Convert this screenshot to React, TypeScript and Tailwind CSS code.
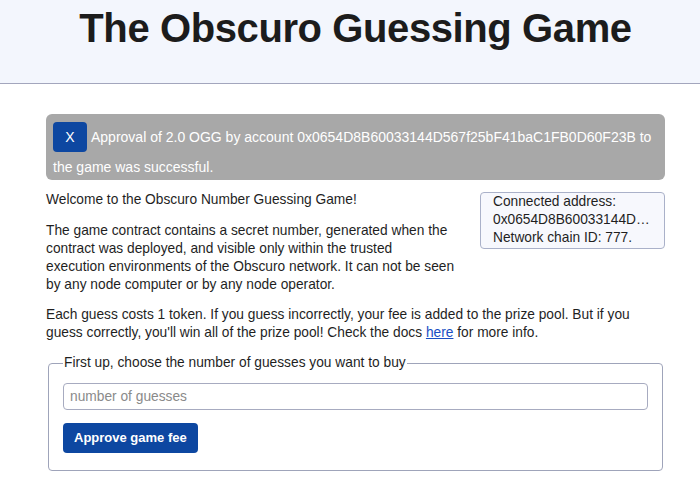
import React from 'react';

const font = { fontFamily: '"Liberation Sans", Arial, sans-serif' };

export default function App() {
  return (
    <div className="min-h-[483px] bg-white text-[#1f1f1f]" style={font}>
      {/* Header */}
      <header className="h-[84px] border-b border-[#a3a6bd] bg-[#f3f6fd] pl-[11px] pt-[8px]">
        <h1 className="text-center text-[40px] font-bold leading-none tracking-[-0.4px] text-[#1c1c1c]">
          The Obscuro Guessing Game
        </h1>
      </header>

      <main className="ml-[46px] w-[619px]">
        {/* Approval alert */}
        <div className="mt-[30px] h-[66px] rounded-[6px] bg-[#a8a8a8] pl-[7px] pr-[8px] pt-[8px] text-[14px] leading-[30px] text-white">
          <button className="mr-[4px] inline-block h-[30px] w-[34px] rounded-[4px] bg-[#0d47a1] align-top text-[14px] leading-[30px] text-white">
            X
          </button>
          Approval of 2.0 OGG by account 0x0654D8B60033144D567f25bF41baC1FB0D60F23B to the game was successful.
        </div>

        {/* Intro */}
        <div className="mt-[11px] flex items-start justify-between text-[13.75px] leading-[18px]">
          <div className="w-[420px]">
            <p>Welcome to the Obscuro Number Guessing Game!</p>
            <p className="mt-[13px]">
              The game contract contains a secret number, generated when the contract was deployed, and visible only
              within the trusted
              <br />
              execution environments of the Obscuro network. It can not be seen by any node computer or by any node
              operator.
            </p>
          </div>
          <div className="mt-[1px] w-[185px] rounded-[4px] border border-[#aab1c9] bg-[#f7f8fd] pb-[1px] pl-[12px] pr-[12px]">
            <p>Connected address:</p>
            <p className="truncate">0x0654D8B60033144D567f25bF41baC1FB0D60F23B</p>
            <p>Network chain ID: 777.</p>
          </div>
        </div>

        <p className="mt-[12px] text-[13.75px] leading-[18px]">
          Each guess costs 1 token. If you guess incorrectly, your fee is added to the prize pool. But if you guess
          correctly, you'll win all of the prize pool! Check the docs{' '}
          <a href="#docs" className="text-[#1a4fc4] underline">
            here
          </a>{' '}
          for more info.
        </p>

        {/* Buy guesses */}
        <fieldset className="mx-[2px] mt-[12px] rounded-[4px] border border-[#9fa4ba] px-[14px] pb-[17px] pt-[11px]">
          <legend className="px-[1px] text-[13.75px] leading-[18px]">
            First up, choose the number of guesses you want to buy
          </legend>
          <input
            type="text"
            placeholder="number of guesses"
            className="block h-[27px] w-full rounded-[4px] border border-[#a7abc0] px-[6px] text-[13.75px] placeholder:text-[#8a8a8a] focus:outline-none"
          />
          <button className="mt-[13px] h-[30px] rounded-[4px] bg-[#0d47a1] px-[11px] text-[13px] font-bold text-white">
            Approve game fee
          </button>
        </fieldset>
      </main>
    </div>
  );
}
